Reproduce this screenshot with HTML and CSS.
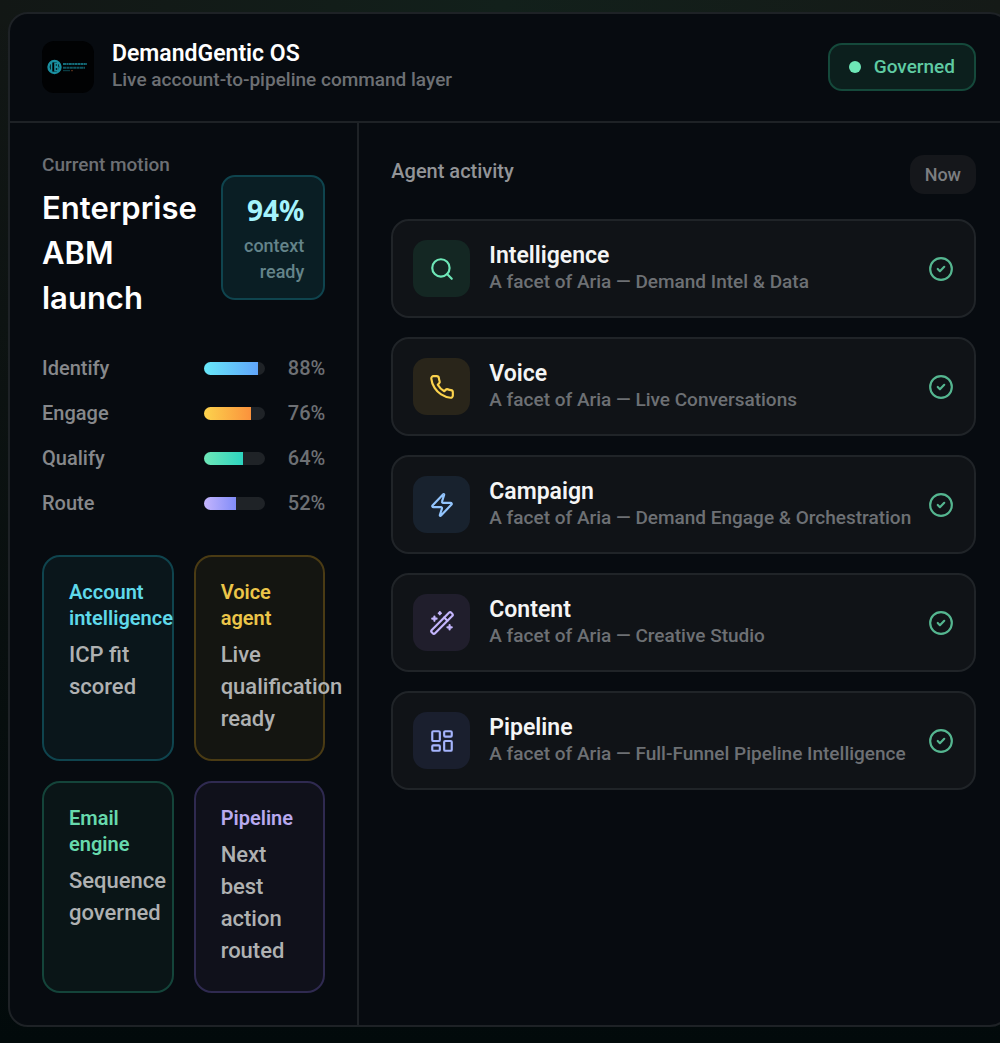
FILE: index.html
```html
<!DOCTYPE html>
<html lang="en">
<head>
    <meta charset="UTF-8">
    <meta name="viewport" content="width=device-width, initial-scale=1.0">
    <title>DemandGentic OS</title>
    <link rel="stylesheet" href="styles.css">
</head>
<body>

    <main class="panel">
        <header class="panel-header">
            <svg class="logo" viewBox="0 0 52 52" aria-hidden="true">
                <g fill="none" stroke="#1a8fa0">
                    <circle cx="12.5" cy="26" r="6" stroke-width="2.4"/>
                    <path d="M9.500 22v8M13 21.500v9M13 22.500h2.500v3H13M13 26.500h3v3h-3" stroke-width="1.600"/>
                    <path d="M21 23h24" stroke-width="2" stroke-dasharray="3 .4 2 .4" opacity=".75"/>
                    <path d="M21 26.700h22" stroke-width="2" stroke-dasharray="3 .4" opacity=".6"/>
                    <path d="M21 29.700h7" stroke-width="1" opacity=".5"/>
                </g>
                <path d="M29 29.700h2" stroke="#8a4a2a" opacity=".7"/>
            </svg>
            <div class="brand">
                <h1 class="brand-name">DemandGentic OS</h1>
                <p class="brand-tagline">Live account-to-pipeline command layer</p>
            </div>
            <span class="status"><span class="status-dot"></span>Governed</span>
        </header>

        <div class="panel-body">
            <section class="motion">
                <div class="motion-top">
                    <div>
                        <p class="motion-label">Current motion</p>
                        <h2 class="motion-title">Enterprise ABM launch</h2>
                    </div>
                    <div class="score">
                        <strong class="score-value">94%</strong>
                        <span class="score-label">context ready</span>
                    </div>
                </div>

                <ul class="funnel">
                    <li class="funnel-row">
                        <span>Identify</span>
                        <span class="bar"><span class="bar-fill cyan-fill" style="width: 88%"></span></span>
                        <span class="percent">88%</span>
                    </li>
                    <li class="funnel-row">
                        <span>Engage</span>
                        <span class="bar"><span class="bar-fill amber-fill" style="width: 76%"></span></span>
                        <span class="percent">76%</span>
                    </li>
                    <li class="funnel-row">
                        <span>Qualify</span>
                        <span class="bar"><span class="bar-fill green-fill" style="width: 64%"></span></span>
                        <span class="percent">64%</span>
                    </li>
                    <li class="funnel-row">
                        <span>Route</span>
                        <span class="bar"><span class="bar-fill violet-fill" style="width: 52%"></span></span>
                        <span class="percent">52%</span>
                    </li>
                </ul>

                <div class="tiles">
                    <article class="tile tile-cyan">
                        <h3 class="tile-title">Account intelligence</h3>
                        <p class="tile-text">ICP fit scored</p>
                    </article>
                    <article class="tile tile-amber">
                        <h3 class="tile-title">Voice agent</h3>
                        <p class="tile-text">Live qualification ready</p>
                    </article>
                    <article class="tile tile-green">
                        <h3 class="tile-title">Email engine</h3>
                        <p class="tile-text">Sequence governed</p>
                    </article>
                    <article class="tile tile-violet">
                        <h3 class="tile-title">Pipeline</h3>
                        <p class="tile-text">Next best action routed</p>
                    </article>
                </div>
            </section>

            <section class="activity">
                <div class="activity-header">
                    <h2 class="activity-title">Agent activity</h2>
                    <span class="now">Now</span>
                </div>

                <ul class="agents">
                    <li class="agent">
                        <span class="agent-icon icon-green">
                            <svg class="icon" viewBox="0 0 24 24"><circle cx="11" cy="11" r="8"/><path d="m21 21-4.300-4.300"/></svg>
                        </span>
                        <div class="agent-info">
                            <h3 class="agent-name">Intelligence</h3>
                            <p class="agent-text">A facet of Aria — Demand Intel &amp; Data</p>
                        </div>
                        <svg class="icon check" viewBox="0 0 24 24"><circle cx="12" cy="12" r="10"/><path d="m9 12 2 2 4-4"/></svg>
                    </li>
                    <li class="agent">
                        <span class="agent-icon icon-amber">
                            <svg class="icon" viewBox="0 0 24 24"><path d="M22 16.920v3a2 2 0 0 1-2.180 2 19.790 19.790 0 0 1-8.630-3.070 19.500 19.500 0 0 1-6-6 19.790 19.790 0 0 1-3.070-8.670A2 2 0 0 1 4.110 2h3a2 2 0 0 1 2 1.720 12.840 12.840 0 0 0 .7 2.810 2 2 0 0 1-.45 2.110L8.090 9.910a16 16 0 0 0 6 6l1.270-1.270a2 2 0 0 1 2.110-.45 12.840 12.840 0 0 0 2.810.7A2 2 0 0 1 22 16.920z"/></svg>
                        </span>
                        <div class="agent-info">
                            <h3 class="agent-name">Voice</h3>
                            <p class="agent-text">A facet of Aria — Live Conversations</p>
                        </div>
                        <svg class="icon check" viewBox="0 0 24 24"><circle cx="12" cy="12" r="10"/><path d="m9 12 2 2 4-4"/></svg>
                    </li>
                    <li class="agent">
                        <span class="agent-icon icon-blue">
                            <svg class="icon" viewBox="0 0 24 24"><path d="M4 14a1 1 0 0 1-.78-1.630l9.900-10.200a.5.5 0 0 1 .86.46l-1.920 6.020A1 1 0 0 0 13 10h7a1 1 0 0 1 .78 1.630l-9.900 10.200a.5.5 0 0 1-.86-.46l1.920-6.020A1 1 0 0 0 11 14z"/></svg>
                        </span>
                        <div class="agent-info">
                            <h3 class="agent-name">Campaign</h3>
                            <p class="agent-text">A facet of Aria — Demand Engage &amp; Orchestration</p>
                        </div>
                        <svg class="icon check" viewBox="0 0 24 24"><circle cx="12" cy="12" r="10"/><path d="m9 12 2 2 4-4"/></svg>
                    </li>
                    <li class="agent">
                        <span class="agent-icon icon-violet">
                            <svg class="icon" viewBox="0 0 24 24"><path d="m21.640 3.640-1.280-1.280a1.210 1.210 0 0 0-1.720 0L2.360 18.640a1.210 1.210 0 0 0 0 1.720l1.280 1.280a1.200 1.200 0 0 0 1.720 0L21.640 5.360a1.200 1.200 0 0 0 0-1.720"/><path d="m14 7 3 3M5 6v4M19 14v4M10 2v2M7 8H3M21 16h-4M11 3H9"/></svg>
                        </span>
                        <div class="agent-info">
                            <h3 class="agent-name">Content</h3>
                            <p class="agent-text">A facet of Aria — Creative Studio</p>
                        </div>
                        <svg class="icon check" viewBox="0 0 24 24"><circle cx="12" cy="12" r="10"/><path d="m9 12 2 2 4-4"/></svg>
                    </li>
                    <li class="agent">
                        <span class="agent-icon icon-indigo">
                            <svg class="icon" viewBox="0 0 24 24"><rect x="3" y="3" width="7" height="9" rx="1"/><rect x="14" y="3" width="7" height="5" rx="1"/><rect x="14" y="12" width="7" height="9" rx="1"/><rect x="3" y="16" width="7" height="5" rx="1"/></svg>
                        </span>
                        <div class="agent-info">
                            <h3 class="agent-name">Pipeline</h3>
                            <p class="agent-text">A facet of Aria — Full-Funnel Pipeline Intelligence</p>
                        </div>
                        <svg class="icon check" viewBox="0 0 24 24"><circle cx="12" cy="12" r="10"/><path d="m9 12 2 2 4-4"/></svg>
                    </li>
                </ul>
            </section>
        </div>
    </main>

</body>
</html>
```
FILE: styles.css
```css
* {
    box-sizing: border-box;
}
body {
    margin: 0;
    padding: 12px 0 16px 8px;
    overflow: hidden;
    font-family: Roboto, "Noto Sans", sans-serif;
    font-size: 20px;
    line-height: 26px;
    color: #fff;
    background: linear-gradient(180deg, rgba(2, 10, 11, 0) 0%, #020a0b 100%), linear-gradient(90deg, #121715 0%, #12201b 50%, #151a17 100%);
}
h1, h2, h3, p, ul {
    margin: 0;
    padding: 0;
}
ul {
    list-style: none;
}
.panel {
    margin-right: -10px;
    border: 2px solid #1e2226;
    border-radius: 20px;
    background-color: #070b10;
}
.panel-header {
    display: flex;
    align-items: center;
    gap: 18px;
    padding: 27px 32px 28px;
    border-bottom: 2px solid #1e2226;
}
.logo {
    width: 52px;
    height: 52px;
    border-radius: 12px;
    background-color: #010203;
}
.brand {
    flex: 1;
}
.brand-name {
    font-size: 23px;
    font-weight: 600;
    line-height: 26px;
}
.brand-tagline {
    font-size: 19px;
    font-weight: 500;
    color: #6d7074;
}
.status {
    display: flex;
    align-items: center;
    gap: 13px;
    height: 48px;
    padding: 0 19px;
    border: 2px solid #15493b;
    border-radius: 14px;
    background-color: #0c1f1d;
    color: #5fcba3;
    font-size: 19px;
    font-weight: 500;
}
.status-dot {
    width: 12px;
    height: 12px;
    border-radius: 50%;
    background-color: #6ee7b7;
}
.panel-body {
    display: grid;
    grid-template-columns: minmax(0, 35fr) minmax(0, 65fr);
}
.motion {
    padding: 32px;
    border-right: 2px solid #1e2226;
}
.motion-top {
    display: flex;
    align-items: center;
    justify-content: space-between;
    gap: 20px;
}
.motion-label {
    font-size: 19px;
    font-weight: 500;
    line-height: 20px;
    color: #6d7074;
}
.motion-title {
    margin-top: 10px;
    font-family: Inter, sans-serif;
    font-size: 31px;
    font-weight: 600;
    line-height: 45px;
}
.score {
    flex: 0 0 104px;
    padding: 17px 19px 13px;
    border: 2px solid #0f444e;
    border-radius: 14px;
    background-color: #0a1e24;
    text-align: right;
}
.score-value {
    display: block;
    margin-bottom: 7px;
    font-family: "Noto Sans", sans-serif;
    font-size: 28px;
    font-weight: 700;
    line-height: 32px;
    color: #a5f3fc;
}
.score-label {
    display: block;
    font-size: 18px;
    font-weight: 500;
    color: #64848a;
}
.funnel {
    display: grid;
    gap: 19px;
    margin-top: 35px;
    font-weight: 500;
    color: #86888b;
}
.funnel-row {
    display: grid;
    grid-template-columns: 144px minmax(0, 1fr) 42px;
    align-items: center;
    gap: 18px;
}
.bar {
    height: 13px;
    overflow: hidden;
    border-radius: 7px;
    background-color: #1f2327;
}
.bar-fill {
    display: block;
    height: 100%;
}
.cyan-fill {
    background: linear-gradient(90deg, #67e8f9, #60a5fa);
}
.amber-fill {
    background: linear-gradient(90deg, #fcd34d, #fb923c);
}
.green-fill {
    background: linear-gradient(90deg, #6ee7b7, #2dd4bf);
}
.violet-fill {
    background: linear-gradient(90deg, #c4b5fd, #818cf8);
}
.percent {
    color: #6d7074;
    text-align: right;
}
.tiles {
    display: grid;
    grid-template-columns: repeat(2, minmax(0, 1fr));
    gap: 20px;
    margin-top: 39px;
}
.tile {
    padding: 22px 25px 24px;
    border: 2px solid;
    border-radius: 18px;
}
.tile-title {
    font-size: 20px;
    font-weight: 600;
    line-height: 26px;
}
.tile-text {
    margin-top: 8px;
    font-size: 22px;
    font-weight: 500;
    line-height: 32px;
    color: #afb1b2;
}
.tile-cyan {
    border-color: #0f444e;
    background-color: #0a161b;
}
.tile-cyan .tile-title {
    color: #5fd9ea;
}
.tile-amber {
    border-color: #4a3b14;
    background-color: #141511;
}
.tile-amber .tile-title {
    color: #ecc549;
}
.tile-green {
    border-color: #14443a;
    background-color: #0a1517;
}
.tile-green .tile-title {
    color: #67d9ac;
}
.tile-violet {
    border-color: #2f2a50;
    background-color: #10111b;
}
.tile-violet .tile-title {
    color: #b8a9ef;
}
.activity {
    padding: 32px;
}
.activity-header {
    display: flex;
    align-items: flex-start;
    justify-content: space-between;
}
.activity-title {
    font-size: 20px;
    font-weight: 500;
    line-height: 32px;
    color: #929497;
}
.now {
    height: 39px;
    padding: 0 15px;
    border-radius: 14px;
    background-color: #15171b;
    color: #7c7e81;
    font-size: 18px;
    font-weight: 500;
    line-height: 39px;
}
.agents {
    display: grid;
    grid-template-columns: minmax(0, 1fr);
    gap: 19px;
    margin-top: 25px;
}
.agent {
    display: flex;
    align-items: center;
    gap: 19px;
    padding: 19px 20px;
    border: 2px solid #202428;
    border-radius: 18px;
    background-color: #101317;
}
.agent-icon {
    display: flex;
    align-items: center;
    justify-content: center;
    flex: 0 0 57px;
    height: 57px;
    border-radius: 14px;
}
.icon {
    flex: none;
    width: 26px;
    height: 26px;
    fill: none;
    stroke: currentColor;
    stroke-width: 2;
    stroke-linecap: round;
    stroke-linejoin: round;
}
.icon-green {
    background-color: #142723;
    color: #6ee7b7;
}
.icon-amber {
    background-color: #29251a;
    color: #fcd34d;
}
.icon-blue {
    background-color: #18222e;
    color: #93c5fd;
}
.icon-violet {
    background-color: #201e2c;
    color: #c4b5fd;
}
.icon-indigo {
    background-color: #1a1f2e;
    color: #a5b4fc;
}
.agent-info {
    flex: 1;
    min-width: 0;
    white-space: nowrap;
}
.agent-name {
    font-size: 23px;
    font-weight: 600;
    line-height: 26px;
    color: #f4f5f5;
}
.agent-text {
    font-size: 19px;
    font-weight: 500;
    color: #6d7074;
}
.check {
    color: #55b690;
}
```
